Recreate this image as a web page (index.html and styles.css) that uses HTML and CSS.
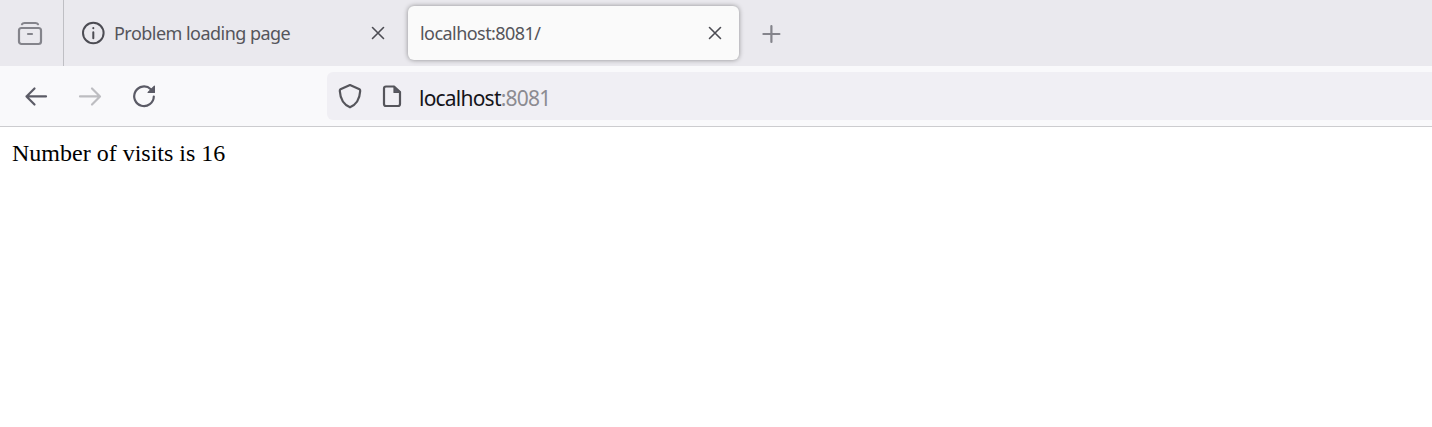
FILE: index.html
```html
<!DOCTYPE html>
<html lang="en">
<head>
<meta charset="utf-8">
<title>localhost:8081/</title>
<link rel="stylesheet" href="styles.css">
</head>
<body>
<header class="tabstrip">
  <div class="view">
    <svg class="icon muted" width="30" height="30" viewBox="0 0 30 30"><path d="M7 7.200Q7.700 6 9.500 6h11Q22.300 6 23 7.200"/><rect x="4" y="11" width="22" height="16" rx="2.500"/><path d="M13 17h4"/></svg>
  </div>
  <div class="tab">
    <svg class="icon info" width="24" height="24" viewBox="0 0 24 24"><circle cx="12.300" cy="12" r="10.300"/><path d="M12.300 11.200v6M12.300 7v.3"/></svg>
    <span class="label problem">Problem loading page</span>
    <svg class="icon close" width="14" height="14" viewBox="0 0 14 14"><path d="M1.500 1.500l11 11M12.500 1.500L1.500 12.500"/></svg>
  </div>
  <div class="tab active">
    <span class="label local">localhost:8081/</span>
    <svg class="icon close" width="14" height="14" viewBox="0 0 14 14"><path d="M1.500 1.500l11 11M12.500 1.500L1.500 12.500"/></svg>
  </div>
  <svg class="icon muted plus" width="20" height="20" viewBox="0 0 20 20"><path d="M10.400 2v16M2.400 10h16"/></svg>
</header>
<nav class="toolbar">
  <div class="buttons">
    <svg class="icon" width="24" height="24" viewBox="0 0 24 24"><path d="M22 12.400H2.500M10.500 4.500l-8 8 8 8"/></svg>
    <svg class="icon disabled" width="24" height="24" viewBox="0 0 24 24"><path d="M2 12.400h19.500M14 4.500l8 8-8 8"/></svg>
    <svg class="icon" width="24" height="24" viewBox="0 0 24 24"><path d="M21.800 12.500A9.800 9.800 0 1 1 18.800 5.200"/><path class="solid" d="M22.400 2.200v6.300h-6.300z"/></svg>
  </div>
  <div class="urlbar">
    <svg class="icon dark" width="24" height="26" viewBox="0 0 24 26"><path d="M12 2L21.500 6.200Q22.300 6.700 22.200 8C21.700 16 18.500 21.500 12 24.300C5.500 21.500 2.300 16 1.800 8Q1.700 6.700 2.500 6.200z"/></svg>
    <svg class="icon dark" width="20" height="24" viewBox="0 0 20 24"><path d="M12 2.500H4Q2 2.500 2 4.500v15.500q0 2 2 2h12q2 0 2-2V8z"/><path class="solid" d="M12 2.500v6h6z"/></svg>
    <div class="url"><span class="host">localhost</span><span class="port">:8081</span></div>
  </div>
</nav>
<main class="page">Number of visits is 16</main>
</body>
</html>
```

FILE: styles.css
```css
* { box-sizing: border-box; }
body { margin: 0; background: #fff; overflow: hidden; }
svg { display: block; flex: none; }
.icon { fill: none; stroke: #5b5b66; stroke-width: 2.2; stroke-linecap: round; stroke-linejoin: round; }
.solid { fill: #5b5b66; stroke-width: 1.2; }
.muted { stroke: #84848b; }
.disabled { stroke: #bdbdc1; }
.dark { stroke: #55555b; }
.info { stroke: #4c4c53; stroke-width: 2; }
.close { stroke: #4c4c53; stroke-width: 1.6; }
.tabstrip { display: flex; height: 66px; background: #eae9ee; }
.view { width: 64px; padding: 17px 0 0 15px; border-right: 1px solid #bfbfc4; }
.tab { display: flex; align-items: center; width: 344px; padding: 0 23px 0 17px; }
.info { margin-right: 9px; }
.label { flex: 1; font: 18px/24px "Noto Sans", "Open Sans", sans-serif; color: #55555b; white-space: nowrap; }
.problem { letter-spacing: -0.53px; }
.local { letter-spacing: -0.55px; }
.active { width: 331px; height: 54px; margin-top: 6px; padding: 0 17px 0 12px; border-radius: 6px; background: #fafafa; box-shadow: 0 0 5px rgba(0, 0, 0, 0.4); }
.plus { margin: 24px 0 0 22px; }
.toolbar { display: flex; height: 61px; background: #f9f9fb; border-bottom: 1px solid #cccccf; }
.buttons { display: flex; align-items: center; gap: 30px; width: 327px; padding-left: 24px; }
.urlbar { display: flex; align-items: center; flex: 1; height: 48px; margin-top: 6px; padding-left: 11px; border-radius: 6px 0 0 6px; background: #f0eff4; }
.urlbar svg + svg { margin-left: 20px; }
.url { margin: 3px 0 0 17px; font: 21px/28px "Noto Sans", "Open Sans", sans-serif; letter-spacing: -0.78px; color: #15141a; white-space: nowrap; }
.port { color: #8c8b91; }
.page { padding: 12px; font: 24px/28px "Liberation Serif", serif; color: #000; }
```
